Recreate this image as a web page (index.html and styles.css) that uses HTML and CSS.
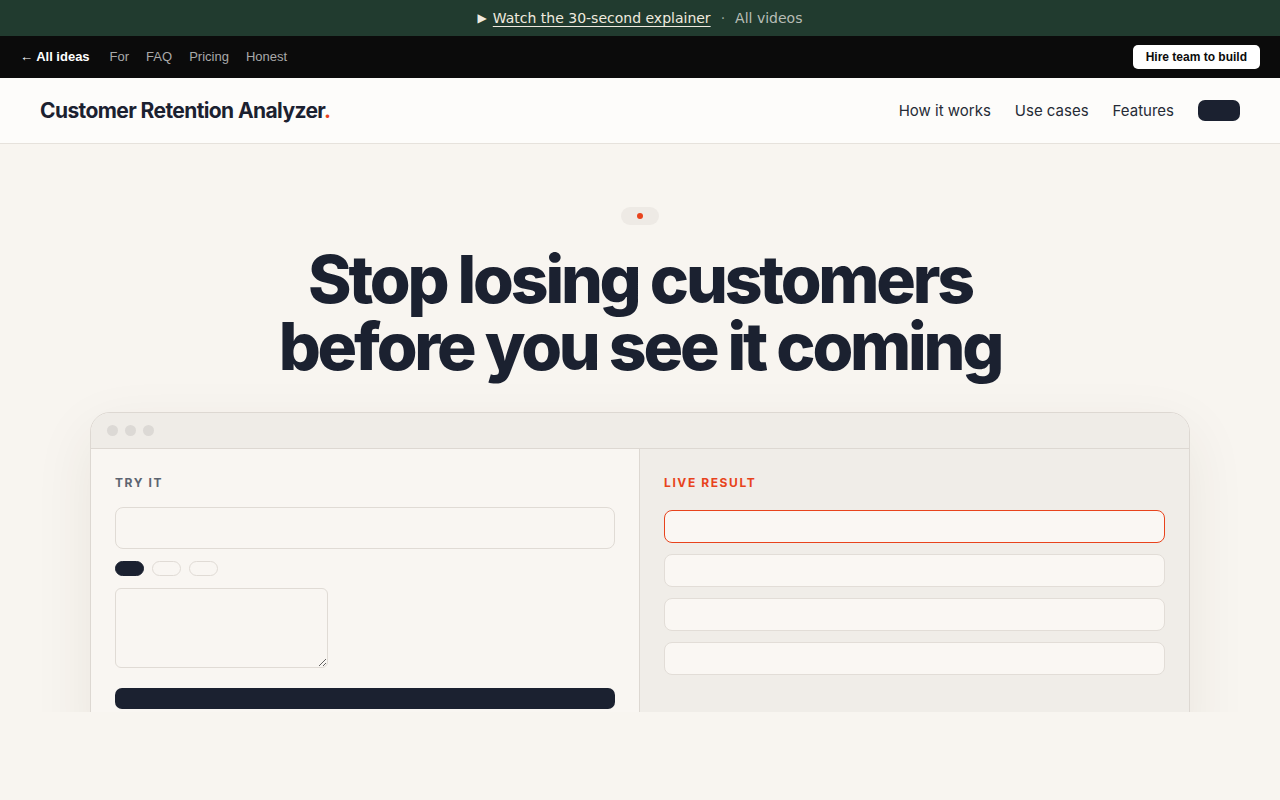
FILE: index.html
```html
<!DOCTYPE html>
<html lang="en">
<head>
  <meta charset="UTF-8" />
  <meta name="viewport" content="width=device-width, initial-scale=1" />
  <title>Customer Retention Analyzer</title>
  <link rel="stylesheet" href="styles.css">
</head>
<body>

<!-- Video strip -->
<div class="video-bar">
  <span class="play">&#9654;</span>
  <a href="#" class="video-link">Watch the 30-second explainer</a>
  <span class="sep">&middot;</span>
  <a href="#" class="video-all">All videos</a>
</div>

<!-- Ideas nav -->
<div class="ideas-bar">
  <nav class="ideas-links">
    <a href="#" class="back">&larr; All ideas</a>
    <a href="#">For</a>
    <a href="#">FAQ</a>
    <a href="#">Pricing</a>
    <a href="#">Honest</a>
  </nav>
  <a href="#" class="hire-btn">Hire team to build</a>
</div>

<!-- Site header -->
<header class="site-header">
  <div class="logo">Customer Retention Analyzer<span class="dot">.</span></div>
  <nav class="main-nav">
    <a href="#">How it works</a>
    <a href="#">Use cases</a>
    <a href="#">Features</a>
    <button class="nav-cta"></button>
  </nav>
</header>

<section class="hero">
  <div class="badge"><span class="badge-dot"></span></div>
  <h1>Stop losing customers<br>before you see it coming</h1>

  <div class="window">
    <div class="window-bar">
      <span></span><span></span><span></span>
    </div>
    <div class="window-body">
      <div class="pane pane-try">
        <div class="label">TRY IT</div>
        <input type="text" class="field">
        <div class="chips">
          <span class="chip active"></span>
          <span class="chip"></span>
          <span class="chip"></span>
        </div>
        <textarea class="notes"></textarea>
        <button class="run-btn"></button>
      </div>
      <div class="pane pane-result">
        <div class="label label-live">LIVE RESULT</div>
        <div class="result-row highlight"></div>
        <div class="result-row"></div>
        <div class="result-row"></div>
        <div class="result-row"></div>
      </div>
    </div>
  </div>
</section>

</body>
</html>
```

FILE: styles.css
```css
body {
  margin: 0;
  background: #f8f5f0;
  font-family: Inter, 'Noto Sans', sans-serif;
  color: #1b2130;
}

a {
  text-decoration: none;
  color: inherit;
}

/* Top video strip */
.video-bar {
  height: 36px;
  background: #213b2f;
  display: flex;
  justify-content: center;
  align-items: center;
  gap: 6px;
  font-family: 'DejaVu Sans', sans-serif;
  font-size: 14px;
  color: #efeadf;
}

.video-bar .play {
  font-size: 12px;
}

.video-link {
  text-decoration: underline;
  text-underline-offset: 3px;
}

.video-bar .sep {
  color: #9aa59d;
  margin: 0 4px;
}

.video-all {
  color: #b7bdb6;
}

/* Ideas nav */
.ideas-bar {
  height: 42px;
  background: #0b0b0b;
  display: flex;
  justify-content: space-between;
  align-items: center;
  padding: 0 20px;
  font-family: 'Liberation Sans', Arial, sans-serif;
  font-size: 13px;
}

.ideas-links {
  display: flex;
  gap: 17px;
  margin-top: -1px;
}

.ideas-links a {
  color: #a9a9a9;
}

.ideas-links .back {
  color: #fff;
  font-weight: 700;
  margin-right: 3px;
}

.hire-btn {
  background: #fff;
  color: #0b0b0b;
  font-weight: 700;
  font-size: 12px;
  padding: 5px 13px;
  border-radius: 5px;
}

/* Site header */
.site-header {
  height: 65px;
  background: #fdfcfa;
  border-bottom: 1px solid #e6e2dc;
  display: flex;
  justify-content: space-between;
  align-items: center;
  padding: 0 40px;
}

.logo {
  font-size: 21px;
  font-weight: 700;
  letter-spacing: -0.6px;
}

.logo .dot {
  color: #e8431c;
}

.main-nav {
  display: flex;
  align-items: center;
  gap: 24px;
  font-size: 15px;
}

.main-nav a {
  color: #262b36;
}

.nav-cta {
  width: 42px;
  height: 21px;
  border: none;
  border-radius: 7px;
  background: #1b2130;
}

/* Hero */
.hero {
  height: 568px;
  overflow: hidden;
  display: flex;
  flex-direction: column;
  align-items: center;
  padding-top: 63px;
  box-sizing: border-box;
}

.hero > * {
  flex-shrink: 0;
}

.badge {
  width: 38px;
  height: 18px;
  border-radius: 9px;
  background: #eeeae5;
  display: flex;
  justify-content: center;
  align-items: center;
}

.badge-dot {
  width: 6px;
  height: 6px;
  border-radius: 50%;
  background: #e8431c;
}

h1 {
  margin: 21px 0 32px;
  font-size: 66px;
  line-height: 67px;
  font-weight: 800;
  letter-spacing: -3.2px;
  text-align: center;
  color: #1b2130;
}

/* Demo window */
.window {
  width: 1100px;
  box-sizing: border-box;
  border: 1px solid #ddd8d2;
  border-radius: 20px 20px 0 0;
  background: #f9f6f2;
  box-shadow: 0 20px 60px rgba(60, 45, 25, 0.08);
  overflow: hidden;
}

.window-bar {
  height: 35px;
  background: #efece7;
  border-bottom: 1px solid #ddd8d2;
  display: flex;
  align-items: center;
  gap: 7px;
  padding-left: 16px;
}

.window-bar span {
  width: 11px;
  height: 11px;
  border-radius: 50%;
  background: #dcd9d5;
}

.window-body {
  display: grid;
  grid-template-columns: 548px 1fr;
  min-height: 300px;
}

.pane {
  padding: 27px 24px 24px;
  display: flex;
  flex-direction: column;
  align-items: flex-start;
}

.pane-result {
  background: #f0ede8;
  border-left: 1px solid #ddd8d2;
}

.label {
  font-size: 12px;
  font-weight: 700;
  letter-spacing: 1.6px;
  color: #5c6470;
  line-height: 14px;
  margin-bottom: 17px;
}

.label-live {
  color: #e8431c;
  margin-bottom: 20px;
}

.field {
  width: 500px;
  height: 42px;
  box-sizing: border-box;
  border: 1px solid #e0dbd5;
  border-radius: 8px;
  background: #f9f6f2;
  margin: 0;
}

.chips {
  display: flex;
  gap: 8px;
  margin-top: 12px;
}

.chip {
  width: 29px;
  height: 15px;
  box-sizing: border-box;
  border: 1px solid #e0dbd5;
  border-radius: 8px;
}

.chip.active {
  background: #1b2130;
  border-color: #1b2130;
}

.notes {
  width: 213px;
  height: 80px;
  box-sizing: border-box;
  border: 1px solid #e0dbd5;
  border-radius: 6px;
  background: #f9f6f2;
  margin-top: 12px;
}

.run-btn {
  width: 500px;
  height: 21px;
  border: none;
  border-radius: 7px;
  background: #1b2130;
  margin-top: 20px;
}

.result-row {
  width: 501px;
  height: 33px;
  box-sizing: border-box;
  border: 1px solid #e2ddd7;
  border-radius: 8px;
  background: #faf7f3;
  margin-bottom: 11px;
}

.result-row.highlight {
  border-color: #e8431c;
}
```
